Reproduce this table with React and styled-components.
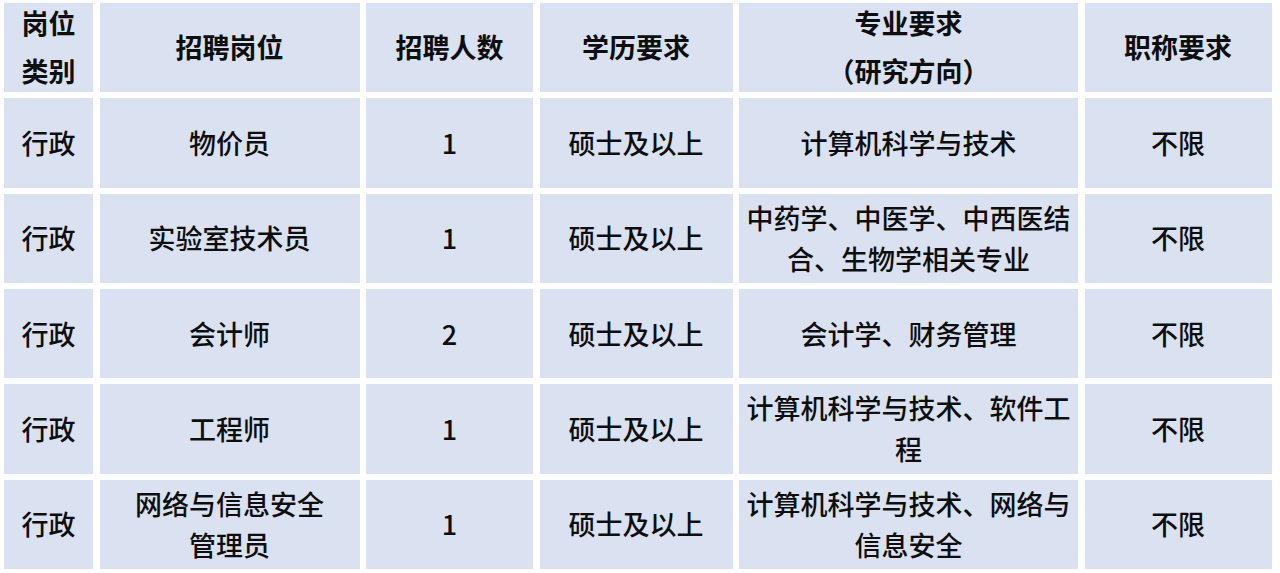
import React from "react";
import styled, { createGlobalStyle } from "styled-components";

const GlobalStyle = createGlobalStyle`
  html, body {
    margin: 0;
    padding: 0;
    background: #ffffff;
  }
  body {
    font-family: "Noto Sans CJK SC", "Noto Sans", sans-serif;
    color: #111111;
  }
`;

const header = [
  ["岗位", "类别"],
  ["招聘岗位"],
  ["招聘人数"],
  ["学历要求"],
  ["专业要求", "（研究方向）"],
  ["职称要求"],
];

const rows = [
  [["行政"], ["物价员"], ["1"], ["硕士及以上"], ["计算机科学与技术"], ["不限"]],
  [
    ["行政"],
    ["实验室技术员"],
    ["1"],
    ["硕士及以上"],
    ["中药学、中医学、中西医结", "合、生物学相关专业"],
    ["不限"],
  ],
  [["行政"], ["会计师"], ["2"], ["硕士及以上"], ["会计学、财务管理"], ["不限"]],
  [
    ["行政"],
    ["工程师"],
    ["1"],
    ["硕士及以上"],
    ["计算机科学与技术、软件工", "程"],
    ["不限"],
  ],
  [
    ["行政"],
    ["网络与信息安全", "管理员"],
    ["1"],
    ["硕士及以上"],
    ["计算机科学与技术、网络与", "信息安全"],
    ["不限"],
  ],
];

export default function App() {
  return (
    <>
      <GlobalStyle />
      <Table>
        {header.map((lines, i) => (
          <Cell key={"h" + i} $head>
            {lines.map((l, j) => (
              <Line key={j}>{l}</Line>
            ))}
          </Cell>
        ))}
        {rows.map((row, r) =>
          row.map((lines, c) => (
            <Cell key={r + "-" + c}>
              {lines.map((l, j) => (
                <Line key={j}>{l}</Line>
              ))}
            </Cell>
          ))
        )}
      </Table>
    </>
  );
}

const Table = styled.div`
  box-sizing: border-box;
  width: 1280px;
  height: 573px;
  padding: 3px 8px 4px 4px;
  display: grid;
  grid-template-columns: 89px 260px 167px 193px 339px 187px;
  grid-template-rows: repeat(6, minmax(0, 1fr));
  column-gap: 6.5px;
  row-gap: 6px;
  background: #ffffff;
`;

const Cell = styled.div`
  box-sizing: border-box;
  min-height: 0;
  overflow: hidden;
  background: #dae2f1;
  display: flex;
  flex-direction: column;
  align-items: center;
  justify-content: center;
  text-align: center;
  padding-bottom: 1px;
  font-size: 27px;
  font-weight: ${(p) => (p.$head ? 700 : 500)};
  line-height: ${(p) => (p.$head ? "48px" : "41px")};
  color: #0e0e0e;
`;

const Line = styled.span`
  display: block;
  white-space: nowrap;
`;
